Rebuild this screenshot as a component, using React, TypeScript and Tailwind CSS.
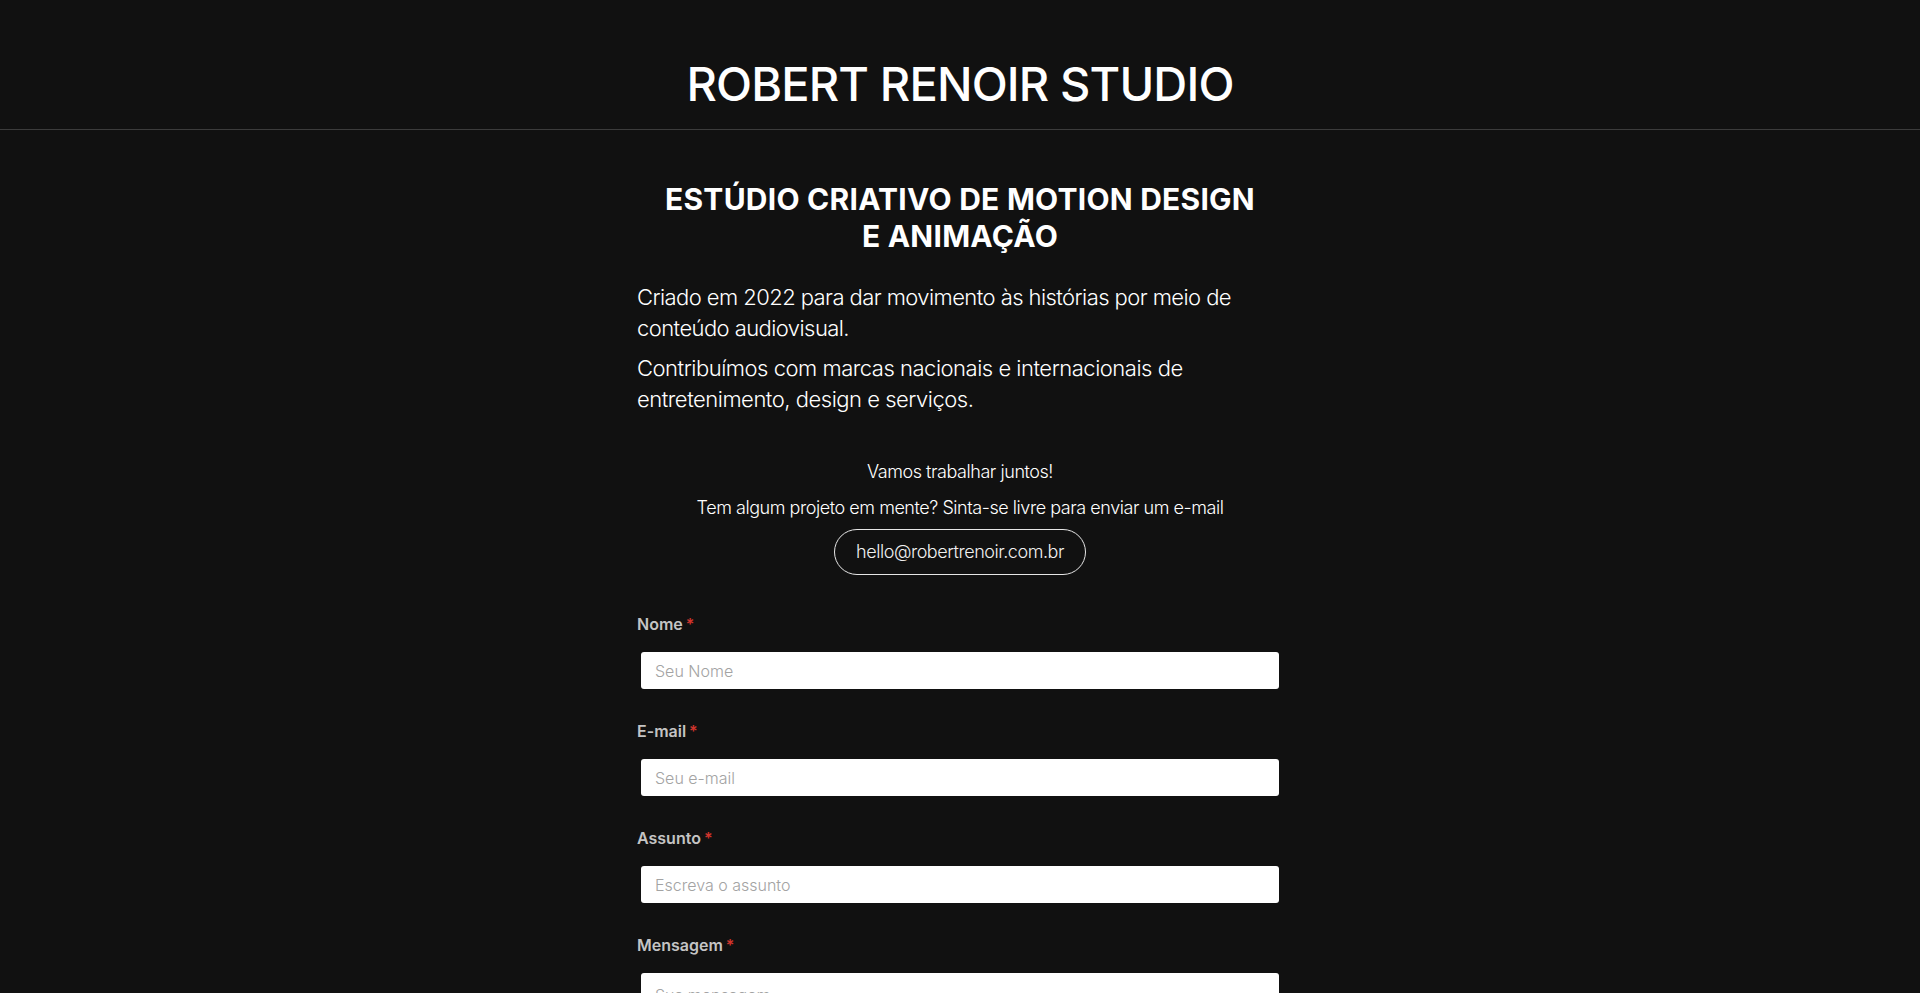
import React from "react";

interface FieldProps {
    label: string;
    placeholder: string;
    id: string;
    type?: string;
}

function Field({ label, placeholder, id, type = "text" }: FieldProps) {
    return (
        <div className="flex flex-col">
            <label htmlFor={id} className="text-[16px] leading-[24px] font-semibold text-[#c4c4c4]">
                {label}
                <span className="text-[#d0342c] ml-[3px]">*</span>
            </label>
            <input
                id={id}
                type={type}
                placeholder={placeholder}
                className="mt-[16px] mx-[4px] h-[37px] rounded-[3px] bg-white px-[14px] text-[16px] font-light text-[#222] placeholder:text-[#a3a3a3] outline-none"
            />
        </div>
    );
}

function App() {
    return (
        <div className="min-h-screen bg-[#111111] text-white font-['Inter','Liberation_Sans',sans-serif]">
            {/* ------------------------------------- CABEÇALHO */}
            <header className="border-b border-[#3c3c3c] pt-[55px] pb-[16px]">
                <h1 className="text-center text-[47px] leading-[58px] font-medium tracking-[-0.018em]">
                    ROBERT RENOIR STUDIO
                </h1>
            </header>

            <main className="mx-auto w-[646px] pt-[51px] pb-[80px]">
                {/* ------------------------------------- SOBRE */}
                <h2 className="text-center text-[30px] leading-[37px] font-bold tracking-[0.008em]">
                    ESTÚDIO CRIATIVO DE MOTION DESIGN
                    <br />
                    E ANIMAÇÃO
                </h2>
                <p className="mt-[27px] text-[22px] leading-[31px] font-light tracking-[-0.026em]">
                    Criado em 2022 para dar movimento às histórias por meio de conteúdo audiovisual.
                </p>
                <p className="mt-[9px] text-[22px] leading-[31px] font-light tracking-[-0.022em]">
                    Contribuímos com marcas nacionais e internacionais de entretenimento, design e serviços.
                </p>

                {/* ------------------------------------- CONTATO */}
                <div className="mt-[43px] flex flex-col items-center text-[18px] leading-[28px] font-light tracking-[-0.025em]">
                    <p>Vamos trabalhar juntos!</p>
                    <p className="mt-[8px]">Tem algum projeto em mente? Sinta-se livre para enviar um e-mail</p>
                    <a
                        href="#"
                        className="mt-[7px] flex h-[46px] w-[252px] items-center justify-center rounded-full border border-[#e6e6e6] text-[#f0f0f0]"
                    >
                        hello@robertrenoir.com.br
                    </a>
                </div>

                {/* ------------------------------------- FORMULÁRIO */}
                <form className="mt-[37px] flex flex-col gap-[30px]">
                    <Field id="nome" label="Nome" placeholder="Seu Nome" />
                    <Field id="email" label="E-mail" placeholder="Seu e-mail" type="email" />
                    <Field id="assunto" label="Assunto" placeholder="Escreva o assunto" />
                    <div className="flex flex-col">
                        <label htmlFor="mensagem" className="text-[16px] leading-[24px] font-semibold text-[#c4c4c4]">
                            Mensagem
                            <span className="text-[#d0342c] ml-[3px]">*</span>
                        </label>
                        <textarea
                            id="mensagem"
                            placeholder="Sua mensagem"
                            className="mt-[16px] mx-[4px] h-[160px] rounded-[3px] bg-white px-[14px] py-[10px] text-[16px] font-light text-[#222] placeholder:text-[#a3a3a3] outline-none resize-none"
                        />
                    </div>
                </form>
            </main>
        </div>
    );
}

export default App;
